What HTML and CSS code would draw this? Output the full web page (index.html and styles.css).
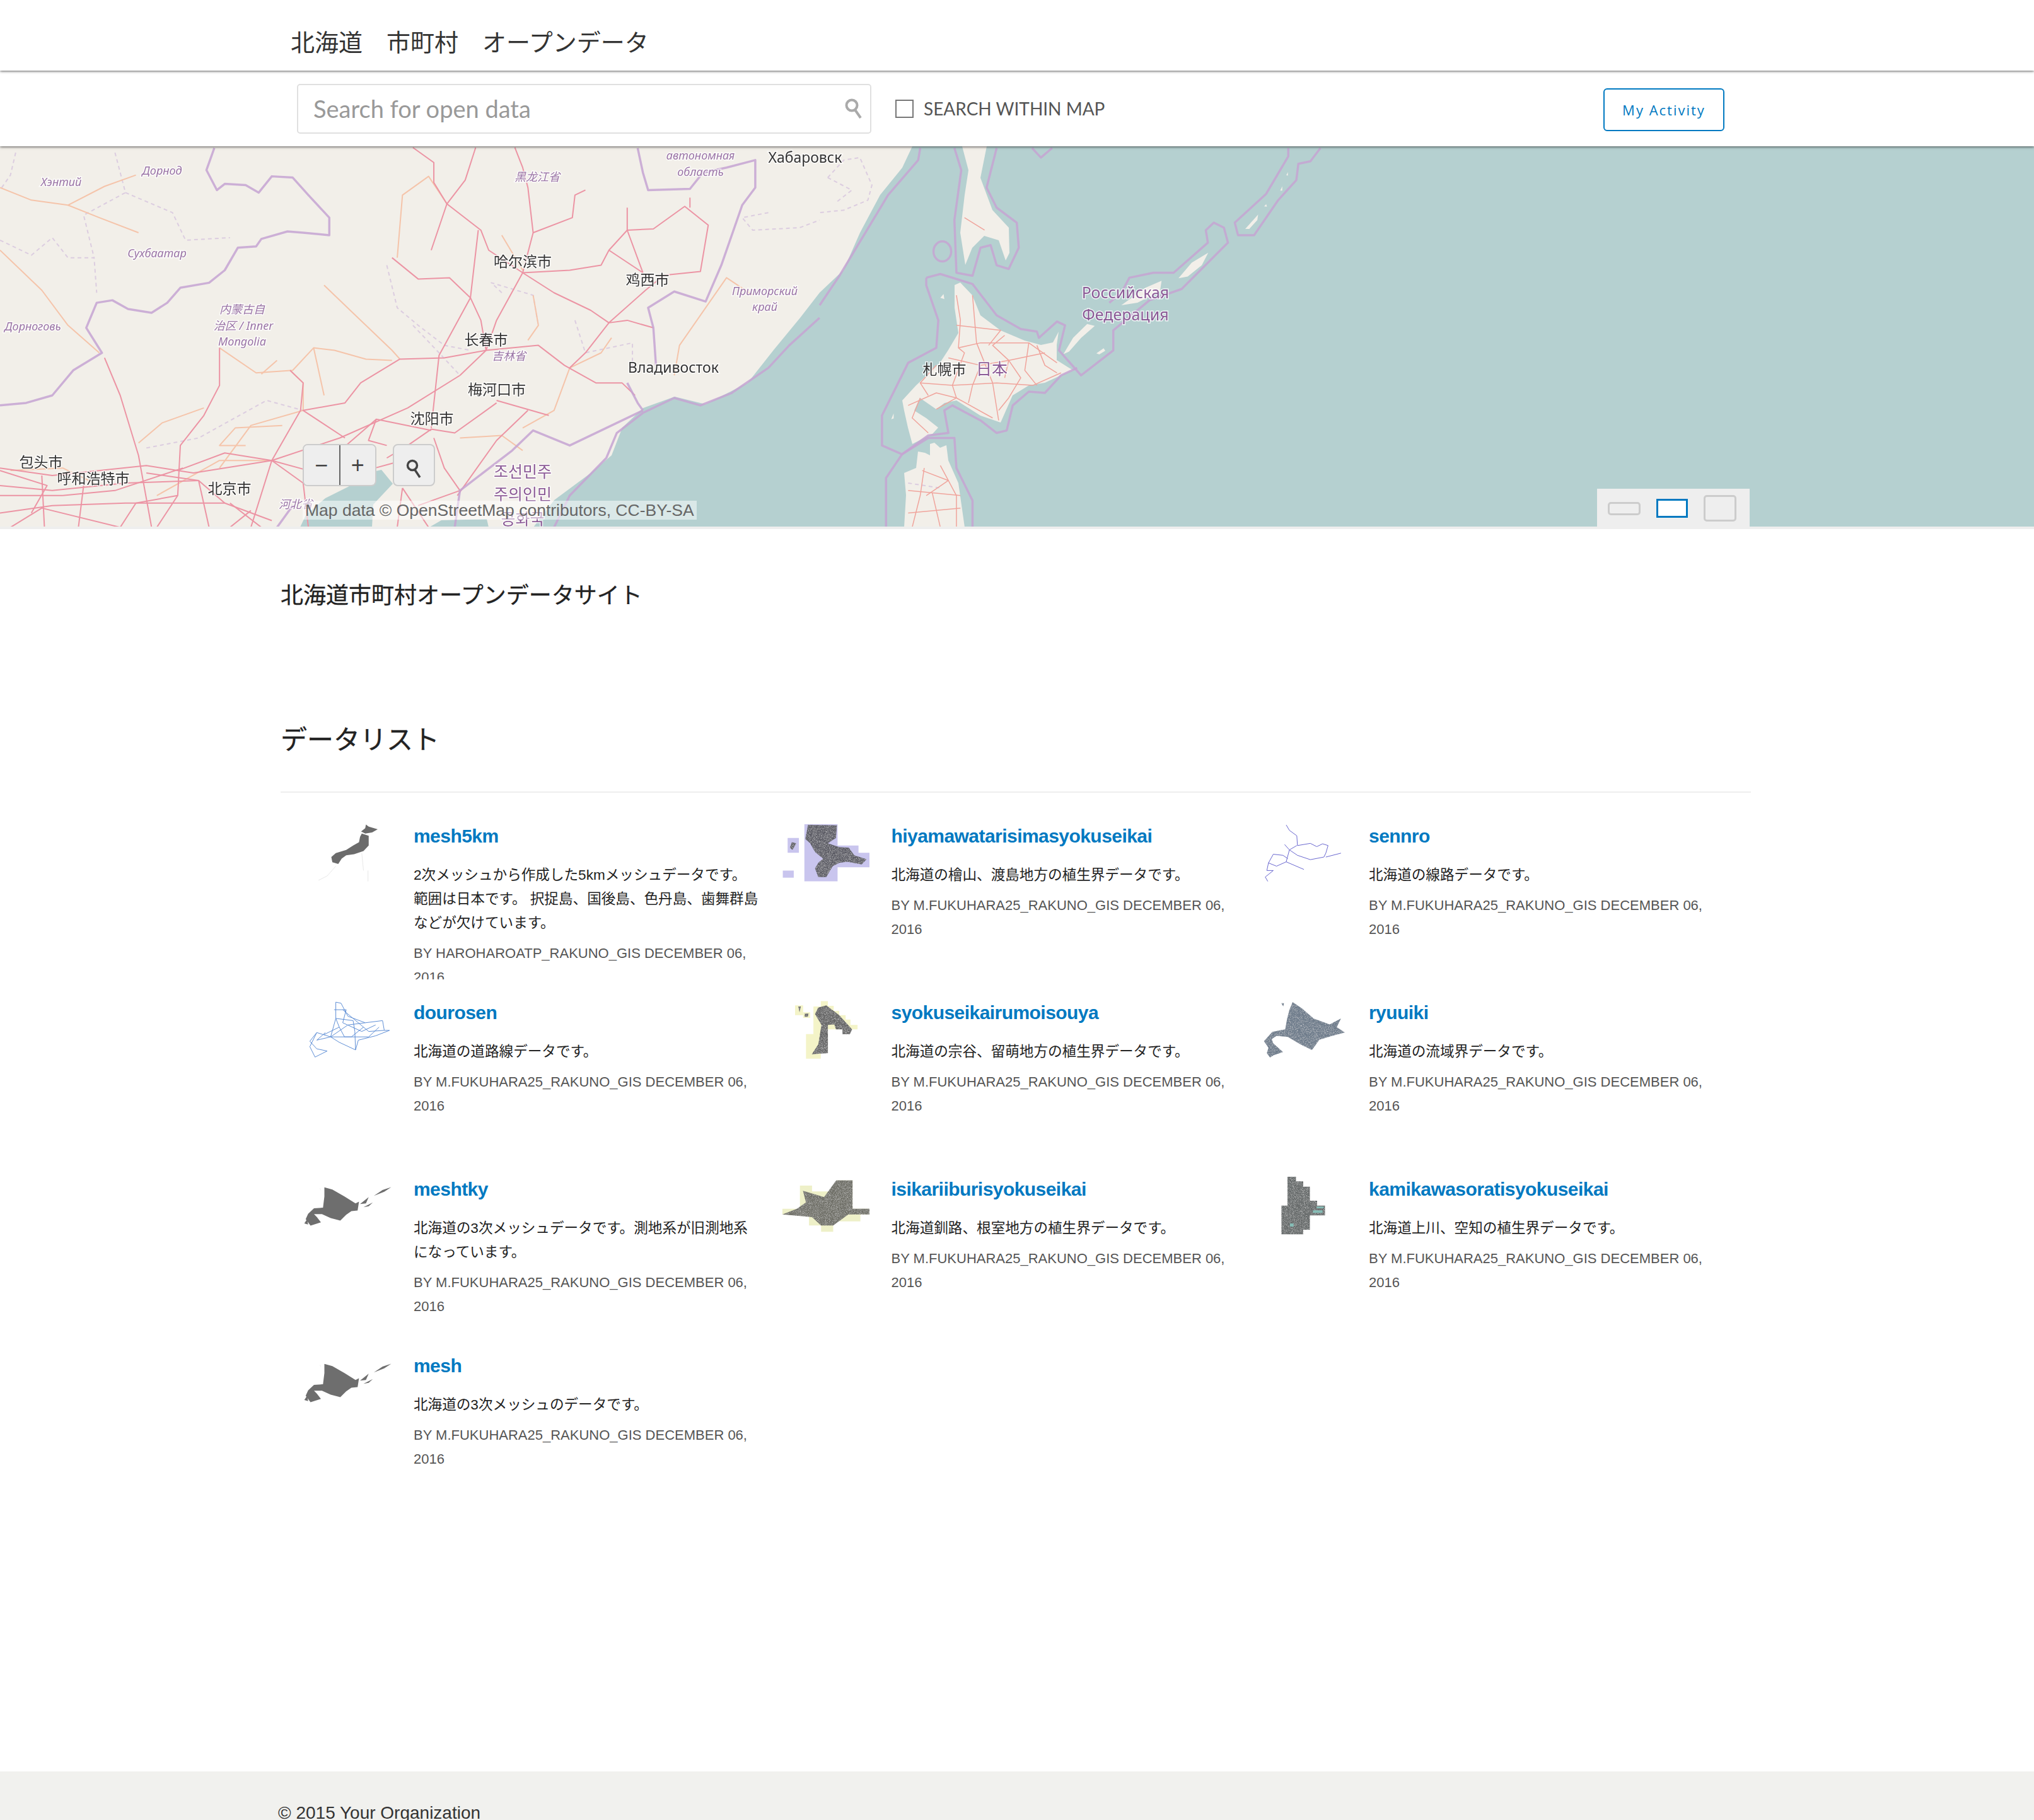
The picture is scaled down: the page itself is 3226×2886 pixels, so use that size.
FILE: index.html
```html
<!DOCTYPE html>
<html lang="ja">
<head>
  <meta charset="utf-8">
  <title>北海道 市町村 オープンデータ</title>
  <link rel="stylesheet" href="styles.css">
</head>
<body>
  <header class="site-header">
    <div class="site-title">北海道　市町村　オープンデータ</div>
  </header>

  <div class="toolbar">
    <div class="search-box">
      <span class="search-placeholder">Search for open data</span>
      <svg class="search-icon" viewBox="0 0 28 32"><circle cx="11" cy="11" r="8.5"/><path d="M16 18 L25 31"/></svg>
    </div>
    <label class="within-map"><span class="checkbox"></span>SEARCH WITHIN MAP</label>
    <a class="activity-btn">My Activity</a>
  </div>

  <section class="map">
    <svg class="map-canvas" viewBox="0 232 3226 603" preserveAspectRatio="none">
      <rect x="0" y="232" width="3226" height="603" class="sea"/>
      <!-- land -->
      <path class="land" d="M0 232 L1447 232 L1431 266 L1396 309 L1364 369 L1338 428 L1300 464 L1269 504 L1227 555 L1186 607 L1119 641 L1070 629 L1020 647 L987 678 L970 722 L937 750 L879 793 L846 836 L775 836 L772 823 L700 825 L681 836 L590 836 L592 800 L623 767 L605 745 L596 747 L552 772 L516 790 L485 817 L476 836 L0 836 Z"/>
      <path class="land" d="M1526 232 L1565 232 L1555 282 L1574 333 L1600 361 L1601 401 L1595 413 L1584 381 L1561 374 L1542 393 L1531 420 L1523 369 L1530 309 L1536 270 Z"/>
      <path class="land" d="M1523 448 L1542 468 L1555 500 L1587 524 L1625 540 L1651 547 L1670 543 L1679 526 L1676 547 L1676 571 L1695 583 L1702 587 L1683 595 L1657 607 L1632 611 L1606 627 L1587 670 L1555 659 L1517 635 L1498 639 L1485 649 L1459 631 L1450 651 L1469 663 L1488 678 L1479 688 L1447 704 L1440 678 L1434 651 L1431 635 L1453 611 L1466 599 L1491 575 L1504 555 L1520 528 L1514 488 L1514 452 Z"/>
      <path class="land" d="M1482 702 L1491 710 L1501 706 L1504 730 L1520 766 L1530 836 L1434 836 L1437 785 L1434 750 L1453 742 L1456 716 L1467 718 L1475 722 L1475 704 Z"/>
      <!-- islands, drawn in the crop's scale -->
      <g transform="translate(1300 230) scale(.638 .397)">
        <path class="land" d="M606 835 L630 770 L665 715 L684 722 L650 770 L620 825 Z M688 832 L706 812 L710 822 L695 836 Z M892 532 L925 470 L966 430 L950 480 L915 525 Z M750 640 L810 570 L850 542 L846 585 L790 630 Z M1058 335 L1090 278 L1088 300 L1068 335 Z M1145 182 L1150 165 L1150 182 Z M1105 245 L1110 236 L1112 246 Z M1160 120 L1164 108 L1164 122 Z M300 610 L308 595 L310 615 Z M178 1095 L184 1072 L184 1092 Z"/>
      </g>
      <!-- west half: traced at 1300x620 crop scale -->
      <g transform="translate(0 230) scale(.829 .397)">
        <g class="admin">
          <polyline points="240,190 330,270 355,380 440,370"/>
          <polyline points="0,380 60,440 100,370 130,450 180,450 185,590"/>
          <polyline points="740,480 760,650 800,720 850,800 900,820"/>
          <polyline points="960,590 940,550 1020,600 1030,720"/>
          <polyline points="280,1210 380,1170 510,1020 580,1060"/>
          <polyline points="1470,270 1420,290 1440,340 1530,330 1568,300"/>
          <polyline points="1100,700 1120,830 1210,790 1210,900"/>
          <polyline points="220,30 240,190 160,280 180,450"/>
          <polyline points="790,720 840,830 880,920"/>
          <polyline points="30,30 20,120 0,180"/>
        </g>
        <g class="road-minor">
          <polyline points="0,170 60,220 130,240 200,165 260,120"/>
          <polyline points="130,240 190,290 265,350"/>
          <polyline points="0,420 80,580 130,720 190,830"/>
          <polyline points="620,560 680,680 750,820 765,855"/>
          <polyline points="420,810 490,910 560,900 600,810 640,820 700,855 750,860"/>
          <polyline points="265,1190 310,1110 390,1050"/>
          <polyline points="555,900 580,950 580,1060"/>
          <polyline points="760,450 770,200 820,125 855,235"/>
          <polyline points="1020,600 1030,720 1010,780"/>
          <polyline points="1440,600 1390,530 1300,800 1290,920"/>
          <polyline points="1090,890 1060,1060 1000,1130"/>
          <polyline points="420,1290 480,1120 580,1060"/>
          <polyline points="300,1400 420,1260 520,1260"/>
          <polyline points="500,915 530,860"/>
          <polyline points="600,810 620,1000"/>
          <polyline points="960,360 1000,500"/>
          <polyline points="1090,890 1150,830 1170,770"/>
          <polyline points="880,1170 960,1160 1000,1220"/>
          <polyline points="20,1300 120,1290 180,1350"/>
          <polyline points="540,1120 450,1130 420,1200 470,1200"/>
        </g>
        <g class="road">
          <polyline points="790,10 830,70 830,150 855,235 920,340 935,420 1000,510 1060,590 1130,660 1165,710 1200,700 1250,730"/>
          <polyline points="910,10 890,140 855,235 825,420"/>
          <polyline points="985,10 1000,90 1010,170 1020,350 1000,510 950,700 930,820 880,920"/>
          <polyline points="1120,180 1100,200 1095,290 1020,350"/>
          <polyline points="1000,510 1090,500 1150,480 1165,420 1200,340 1250,335 1310,245 1355,320 1340,505 1270,520 1235,580 1165,710 1120,830 1090,890"/>
          <polyline points="1320,210 1320,250"/>
          <polyline points="1200,250 1200,340 1230,510"/>
          <polyline points="1165,420 1230,510"/>
          <polyline points="750,450 800,535 860,530 900,610 920,700 930,820"/>
          <polyline points="915,340 900,610 840,840 825,1130"/>
          <polyline points="930,820 850,850 765,855 690,950 660,1030 580,1060 660,1170"/>
          <polyline points="930,820 1030,800 1080,880 1140,950 1190,950 1215,1000"/>
          <polyline points="420,810 420,960 390,1080 345,1200 340,1400 300,1527"/>
          <polyline points="200,850 230,1000 265,1240 290,1527"/>
          <polyline points="555,900 580,950 575,1060 520,1260 480,1527"/>
          <polyline points="880,920 780,1050 650,1170 520,1260 370,1310 280,1280 100,1320 0,1290"/>
          <polyline points="825,1140 720,1095 640,1240 590,1310"/>
          <polyline points="950,1030 870,1150 825,1135 780,1200 740,1250"/>
          <polyline points="950,1020 1050,1080"/>
          <polyline points="1010,1060 950,1180 875,1400"/>
          <polyline points="0,1470 100,1440 240,1430 430,1430 520,1500"/>
          <polyline points="430,1430 380,1340 280,1310"/>
          <polyline points="80,1320 85,1527"/>
          <polyline points="160,1360 150,1527"/>
          <polyline points="440,1430 500,1527"/>
          <polyline points="480,1460 440,1527"/>
          <polyline points="0,1360 100,1380 240,1350 380,1340"/>
          <polyline points="20,1527 80,1450 230,1527"/>
          <polyline points="340,1300 430,1230 520,1260 590,1300"/>
          <polyline points="640,1240 700,1300 770,1260"/>
          <polyline points="770,1370 820,1527"/>
          <polyline points="830,1170 850,1290 880,1380 800,1440"/>
          <polyline points="0,1400 120,1400 220,1380 350,1290"/>
          <polyline points="230,1527 260,1430 340,1400"/>
          <polyline points="0,1300 90,1360 60,1470"/>
          <polyline points="380,1340 400,1527"/>
          <polyline points="520,1260 580,1350 590,1527"/>
          <polyline points="720,1095 705,1180 740,1200"/>
          <polyline points="770,1370 760,1527"/>
        </g>
        <g class="border">
          <polyline points="410,12 395,100 415,180 430,155 470,160 495,190 520,125 560,130 590,200 630,290 630,360 580,350 550,345 500,375 490,405 455,410 430,500 400,550 345,570 320,630 290,670 245,655 215,620 185,630 165,730 195,830 140,900 100,1000 50,1030 0,1040"/>
          <polyline points="1220,12 1230,110 1240,180 1320,175 1345,110 1390,90 1445,60 1445,170 1420,240 1380,480 1350,625 1290,585 1240,650 1250,730 1255,880"/>
          <polyline points="1200,950 1220,1030 1230,1060"/>
          <polyline points="1230,1060 1090,1200 1020,1140 980,1220 880,1380 870,1527"/>
          <polyline points="1568,690 1510,800 1470,890 1400,990 1340,1040 1290,1010 1230,1070 1180,1150 1160,1250 1090,1400 1060,1527"/>
          <polyline points="530,1527 560,1440"/>
        </g>
      </g>
      <!-- east half: traced at 1000x620 crop scale -->
      <g transform="translate(1300 230) scale(.638 .397)">
        <g class="admin">
          <polyline points="20,130 60,60 100,50 130,160 120,220 60,260 0,270"/>
          <polyline points="20,130 80,180 40,230"/>
          <polyline points="220,1350 300,1370"/>
        </g>
        <g class="road-fine">
          <polyline points="340,600 350,700 345,810 360,830 330,960 340,1010 290,1055"/>
          <polyline points="345,810 400,790 520,790 590,870"/>
          <polyline points="330,960 440,950 530,960 600,910"/>
          <polyline points="380,600 390,790 430,950 445,1100"/>
          <polyline points="340,1010 430,1090"/>
          <polyline points="250,1010 230,1090 270,1150"/>
          <polyline points="460,760 430,800 470,860 460,930"/>
          <polyline points="520,790 510,900 540,960"/>
          <polyline points="250,950 330,960"/>
          <polyline points="340,720 450,740 420,800"/>
          <polyline points="320,850 400,880 470,860 560,830"/>
          <polyline points="270,1000 250,950 290,880"/>
          <polyline points="400,880 380,960 370,1030"/>
          <polyline points="470,860 500,930 470,1010 445,1060"/>
          <polyline points="540,800 560,880 590,910"/>
          <polyline points="220,1040 290,990 340,1010"/>
          <polyline points="360,290 410,340"/>
          <polyline points="260,1290 250,1400 230,1527"/>
          <polyline points="300,1280 340,1400 340,1527"/>
          <polyline points="220,1380 350,1400"/>
          <polyline points="220,1470 350,1450"/>
          <polyline points="280,1390 300,1527"/>
          <polyline points="255,1300 320,1340 265,1400"/>
        </g>
        <g class="border">
          <polyline points="250,12 245,60 170,200 110,360 50,520 0,640"/>
          <polyline points="335,12 352,100 335,300 340,510 380,522 400,410 425,400 440,480 470,495 495,410 490,310 440,250 415,170 440,12"/>
          <ellipse cx="305" cy="425" rx="22" ry="40"/>
          <polyline points="528,12 550,50 578,12"/>
          <polyline points="1245,12 1220,65 1190,75 1185,140 1140,220 1080,360 1040,360 1032,310 1110,195 1165,45 1165,12"/>
          <polyline points="265,530 300,515 380,555 440,680 500,735 540,745 545,770 590,705 610,720 595,820 650,920 730,820 730,740 820,620 900,575 1015,390 1005,330 980,310 960,340 965,390 880,510 830,510 770,530 750,590 720,630"/>
          <polyline points="640,890 600,920 560,990 520,985 480,1040 465,1140 440,1150 400,1100 330,1040 310,1060 320,1150 270,1160 205,1235 155,1200 155,1080 220,870 290,810 295,700 265,560 265,530"/>
          <polyline points="205,1235 270,1170 335,1170 340,1290 380,1420 380,1530"/>
          <polyline points="165,1530 165,1330 205,1235"/>
        </g>
      </g>
      <!-- labels -->
      <g class="label-region">
        <text x="97" y="295">Хэнтий</text>
        <text x="257" y="277">Дорнод</text>
        <text x="249" y="408">Сухбаатар</text>
        <text x="52" y="524">Дорноговь</text>
        <text x="384" y="497">内蒙古自</text>
        <text x="386" y="523">治区 / Inner</text>
        <text x="384" y="548">Mongolia</text>
        <text x="852" y="287">黑龙江省</text>
        <text x="1111" y="253">автономная</text>
        <text x="1111" y="279">область</text>
        <text x="1213" y="468">Приморский</text>
        <text x="1213" y="493">край</text>
        <text x="807" y="571">吉林省</text>
        <text x="469" y="806">河北省</text>
      </g>
      <g class="label-city">
        <text x="1277" y="258">Хабаровск</text>
        <text x="829" y="423">哈尔滨市</text>
        <text x="1027" y="452">鸡西市</text>
        <text x="771" y="547">长春市</text>
        <text x="1068" y="591">Владивосток</text>
        <text x="788" y="626">梅河口市</text>
        <text x="685" y="672">沈阳市</text>
        <text x="65" y="741">包头市</text>
        <text x="148" y="767">呼和浩特市</text>
        <text x="364" y="783">北京市</text>
        <text x="1498" y="594">札幌市</text>
      </g>
      <g class="label-country">
        <text x="829" y="757">조선민주</text>
        <text x="829" y="793">주의인민</text>
        <text x="829" y="832">공화국</text>
        <text x="1573" y="594">日本</text>
        <text x="1785" y="473">Российская</text>
        <text x="1785" y="508">Федерация</text>
      </g>
    </svg>

    <div class="zoom-group">
      <button class="map-btn">−</button>
      <button class="map-btn map-btn-plus">+</button>
    </div>
    <button class="map-btn map-btn-search">
      <svg viewBox="0 0 26 32"><circle cx="10" cy="11" r="7.5"/><path d="M14 18 L22 30"/></svg>
    </button>
    <div class="attribution">Map data © OpenStreetMap contributors, CC-BY-SA</div>
    <div class="map-size">
      <span class="size-opt size-small"></span>
      <span class="size-opt size-medium"></span>
      <span class="size-opt size-large"></span>
    </div>
  </section>

  <main class="content">
    <h1 class="site-intro">北海道市町村オープンデータサイト</h1>
    <h2 class="list-title">データリスト</h2>

    <!-- shared outline for the two mesh thumbnails, and the grain on the polygon ones -->
    <svg class="defs"><defs>
      <symbol id="hokkaido" viewBox="111 109 255 280" preserveAspectRatio="none">
        <path d="M158 160 L165 180 L160 165 Z M172 158 L195 168 L230 200 L262 232 L272 224 L268 265 L250 268 L235 285 L218 312 L190 300 L165 282 L142 282 L150 295 L162 320 L132 335 L118 305 L125 280 L142 255 L168 252 L172 200 Z M275 235 L300 203 L292 232 Z M285 250 L312 228 L300 245 Z M315 197 L340 170 L365 157 L345 178 Z M114 325 L122 305 L125 330 Z"/>
      </symbol>
      <filter id="grain" x="0" y="0" width="1" height="1">
        <feTurbulence type="fractalNoise" baseFrequency=".9" numOctaves="2" result="noise"/>
        <feColorMatrix in="noise" type="matrix" values="0 0 0 0 1  0 0 0 0 1  0 0 0 0 1  0 0 0 1.1 -.5" result="dots"/>
        <feComposite in="dots" in2="SourceGraphic" operator="in" result="clipped"/>
        <feMerge><feMergeNode in="SourceGraphic"/><feMergeNode in="clipped"/></feMerge>
      </filter>
    </defs></svg>

    <div class="data-list">
      <article class="data-item">
        <svg class="thumb" viewBox="111 104 255 270" preserveAspectRatio="none">
          <path fill="#6b6b6b" d="M292 108 L300 118 L326 130 L310 145 L290 150 L278 140 L290 125 Z M280 150 L300 160 L300 205 L285 230 L258 245 L235 250 L222 265 L212 290 L195 282 L192 258 L205 240 L235 225 L255 205 L272 190 L275 165 Z"/>
          <path fill="none" stroke="#ccc" d="M205 300 L180 345 L155 365 M280 240 L285 320 M298 320 L298 370"/>
        </svg>
        <div class="item-body">
          <h3><a>mesh5km</a></h3>
          <p class="item-desc">2次メッシュから作成した5kmメッシュデータです。<br>範囲は日本です。 択捉島、国後島、色丹島、歯舞群島<br>などが欠けています。</p>
          <p class="item-meta">BY HAROHAROATP_RAKUNO_GIS DECEMBER 06, 2016</p>
        </div>
      </article>

      <article class="data-item">
        <svg class="thumb" viewBox="35 104 274 270" preserveAspectRatio="none">
          <path fill="#c9c5ee" d="M107 107 H210 V205 H275 V238 H310 V305 H210 V370 H107 Z M55 170 H90 V238 H55 Z M40 320 H74 V353 H40 Z"/>
          <path class="grainy" fill="#5d5d66" d="M118 110 L208 112 L205 170 L180 195 L215 212 L245 215 L262 250 L300 268 L285 292 L240 280 L215 285 L195 300 L175 350 L150 350 L140 310 L150 285 L165 265 L140 235 L125 195 L110 175 Z M68 190 L82 195 L70 225 L62 215 Z"/>
        </svg>
        <div class="item-body">
          <h3><a>hiyamawatarisimasyokuseikai</a></h3>
          <p class="item-desc">北海道の檜山、渡島地方の植生界データです。</p>
          <p class="item-meta">BY M.FUKUHARA25_RAKUNO_GIS DECEMBER 06, 2016</p>
        </div>
      </article>

      <article class="data-item">
        <svg class="thumb" viewBox="29 104 274 270" preserveAspectRatio="none">
          <g fill="none" stroke="#6a68d0" stroke-width="1">
            <polyline points="115,110 125,135 148,160 150,205 190,195 210,210 228,197 245,205 238,240 232,258 190,270 150,250 125,225 110,200"/>
            <polyline points="238,258 285,240"/>
            <polyline points="148,205 125,225 115,280 170,315"/>
            <polyline points="115,280 85,300 60,285 55,320 75,320 50,350 58,370"/>
            <polyline points="60,285 75,245 105,250 120,265"/>
          </g>
        </svg>
        <div class="item-body">
          <h3><a>sennro</a></h3>
          <p class="item-desc">北海道の線路データです。</p>
          <p class="item-meta">BY M.FUKUHARA25_RAKUNO_GIS DECEMBER 06, 2016</p>
        </div>
      </article>

      <article class="data-item">
        <svg class="thumb" viewBox="111 916 255 270" preserveAspectRatio="none">
          <g fill="none" stroke="#5f8fd6" stroke-width="1">
            <polyline points="205,925 220,930 240,990 290,1020 340,1010 345,1055 360,1055 320,1080 270,1100 262,1145 215,1110 190,1085 150,1065 130,1105 150,1140 180,1150 145,1178 130,1130 150,1065"/>
            <polyline points="205,925 205,1000 190,1085 240,1030 290,1020"/>
            <polyline points="215,1040 230,1085 300,1085 330,1040"/>
            <polyline points="170,1075 215,1040 205,1000 255,1010 260,1060 262,1145"/>
            <polyline points="225,960 255,1000 300,1060 345,1055"/>
            <polyline points="190,1085 150,1100 175,1065"/>
            <polyline points="200,960 235,960 225,1020 280,1060 320,1030"/>
            <polyline points="190,1085 250,1085 285,1040"/>
          </g>
        </svg>
        <div class="item-body">
          <h3><a>dourosen</a></h3>
          <p class="item-desc">北海道の道路線データです。</p>
          <p class="item-meta">BY M.FUKUHARA25_RAKUNO_GIS DECEMBER 06, 2016</p>
        </div>
      </article>

      <article class="data-item">
        <svg class="thumb" viewBox="35 916 274 270" preserveAspectRatio="none">
          <path fill="#f4f4c8" d="M158 920 H180 V942 H198 V965 H215 V985 H235 V1005 H250 V1030 H272 V1050 H180 V1160 H158 V1185 H112 V1072 H135 V1025 H135 V945 H158 Z M78 940 H103 V985 H78 Z M103 972 H125 V997 H103 Z"/>
          <path class="grainy" fill="#666" d="M150 950 L175 940 L215 985 L255 1050 L248 1073 L225 1073 L225 1050 L205 1050 L200 1028 L180 1030 L180 1160 L130 1165 L150 1120 L160 1030 L140 980 Z M88 945 L96 945 L92 972 Z M108 978 L120 978 L118 992 L108 992 Z"/>
        </svg>
        <div class="item-body">
          <h3><a>syokuseikairumoisouya</a></h3>
          <p class="item-desc">北海道の宗谷、留萌地方の植生界データです。</p>
          <p class="item-meta">BY M.FUKUHARA25_RAKUNO_GIS DECEMBER 06, 2016</p>
        </div>
      </article>

      <article class="data-item">
        <svg class="thumb" viewBox="29 916 274 270" preserveAspectRatio="none">
          <path class="grainy" fill="#6e7b8b" d="M135 925 L165 955 L200 1000 L250 1028 L285 1000 L272 1040 L297 1065 L258 1080 L218 1098 L195 1145 L160 1120 L120 1085 L85 1080 L70 1095 L75 1115 L105 1155 L75 1170 L65 1180 L55 1160 L60 1135 L46 1105 L72 1062 L112 1050 L118 1000 L125 960 Z M100 930 L108 930 L106 945 Z"/>
        </svg>
        <div class="item-body">
          <h3><a>ryuuiki</a></h3>
          <p class="item-desc">北海道の流域界データです。</p>
          <p class="item-meta">BY M.FUKUHARA25_RAKUNO_GIS DECEMBER 06, 2016</p>
        </div>
      </article>

      <article class="data-item">
        <svg class="thumb thumb-mesh"><use href="#hokkaido"/></svg>
        <div class="item-body">
          <h3><a>meshtky</a></h3>
          <p class="item-desc">北海道の3次メッシュデータです。測地系が旧測地系<br>になっています。</p>
          <p class="item-meta">BY M.FUKUHARA25_RAKUNO_GIS DECEMBER 06, 2016</p>
        </div>
      </article>

      <article class="data-item">
        <svg class="thumb" viewBox="19 108 146 279" preserveAspectRatio="none">
          <path fill="#eef0c8" d="M110 125 H137 V260 H165 V287 H150 V320 H105 V370 H85 V340 H65 V287 H21 V260 H50 V150 H70 V178 H110 Z"/>
          <path class="grainy" fill="#6f6f68" d="M110 125 H137 V260 H165 V287 H130 L105 340 H85 L70 300 L21 287 L45 260 L60 230 L55 175 L90 205 Z"/>
        </svg>
        <div class="item-body">
          <h3><a>isikariiburisyokuseikai</a></h3>
          <p class="item-desc">北海道釧路、根室地方の植生界データです。</p>
          <p class="item-meta">BY M.FUKUHARA25_RAKUNO_GIS DECEMBER 06, 2016</p>
        </div>
      </article>

      <article class="data-item">
        <svg class="thumb" viewBox="810 108 146 279" preserveAspectRatio="none">
          <path class="grainy" fill="#666a6a" d="M858 108 H872 V130 H884 V155 H895 V222 H907 V245 H920 V292 H895 V360 H884 V382 H848 V245 H858 Z"/>
          <path fill="#86bdb6" d="M906 250 H918 V258 H906 Z M900 268 H916 V280 H900 Z M862 330 H868 V345 H862 Z"/>
        </svg>
        <div class="item-body">
          <h3><a>kamikawasoratisyokuseikai</a></h3>
          <p class="item-desc">北海道上川、空知の植生界データです。</p>
          <p class="item-meta">BY M.FUKUHARA25_RAKUNO_GIS DECEMBER 06, 2016</p>
        </div>
      </article>

      <article class="data-item">
        <svg class="thumb thumb-mesh"><use href="#hokkaido"/></svg>
        <div class="item-body">
          <h3><a>mesh</a></h3>
          <p class="item-desc">北海道の3次メッシュのデータです。</p>
          <p class="item-meta">BY M.FUKUHARA25_RAKUNO_GIS DECEMBER 06, 2016</p>
        </div>
      </article>
    </div>
  </main>

  <footer class="site-footer">© 2015 Your Organization</footer>
</body>
</html>
```

FILE: styles.css
```css
html, body { margin: 0; padding: 0; }
body {
  display: flex;
  flex-direction: column;
  height: 2886px;
  overflow: hidden;
  background: #fff;
  color: #222;
  font-family: "Liberation Sans", "Noto Sans CJK JP", sans-serif;
}

/* header + search bar */
.site-header {
  position: relative;
  z-index: 3;
  height: 112px;
  padding: 41px 0 0 461px;
  box-sizing: border-box;
  background: #fff;
  box-shadow: 0 1px 4px rgba(0, 0, 0, .65);
}
.site-title { font-size: 38px; line-height: 48px; color: #333; font-family: "Noto Sans CJK JP", sans-serif; }

.toolbar {
  position: relative;
  z-index: 2;
  display: flex;
  align-items: center;
  height: 120px;
  padding: 0 491px 0 471px;
  background: #fff;
  box-shadow: 0 1px 4px rgba(0, 0, 0, .65);
}
.search-box {
  display: flex;
  align-items: center;
  justify-content: space-between;
  box-sizing: border-box;
  width: 911px;
  height: 79px;
  padding: 0 12px 0 24px;
  border: 2px solid #e0e0e0;
  border-radius: 5px;
}
.search-placeholder { font-family: Lato, sans-serif; font-size: 38px; color: #999; }
.search-icon { width: 28px; height: 32px; fill: none; stroke: #aaa; stroke-width: 4; }
.within-map {
  display: flex;
  align-items: center;
  margin-left: 38px;
  font-family: Lato, sans-serif;
  font-size: 28px;
  color: #555;
}
.checkbox {
  width: 25px;
  height: 25px;
  margin-right: 16px;
  border: 2px solid #777;
}
.activity-btn {
  margin: 4px 0 0 auto;
  box-sizing: border-box;
  width: 192px;
  height: 68px;
  border: 2px solid #0079c1;
  border-radius: 6px;
  color: #0079c1;
  font-family: "Open Sans", sans-serif;
  font-size: 22px;
  line-height: 64px;
  letter-spacing: 2px;
  text-align: center;
}

/* map */
.map {
  position: relative;
  height: 603px;
  border-bottom: 4px solid #eee;
  overflow: hidden;
}
.map-canvas { display: block; width: 100%; height: 603px; filter: blur(.7px); }
.sea { fill: #b5d0d0; }
.land { fill: #f2efe9; }
.map-canvas polyline, .map-canvas ellipse { fill: none; vector-effect: non-scaling-stroke; stroke-linejoin: round; }
.road polyline { stroke: #ec94a4; stroke-width: 2; }
.road-minor polyline { stroke: #f5c4aa; stroke-width: 2; }
.road-fine polyline { stroke: #f0a49c; stroke-width: 1.5; }
.admin polyline { stroke: #dccde0; stroke-width: 2; stroke-dasharray: 6 5; }
.border polyline, .border ellipse { stroke: #c6a5d3; stroke-width: 3.5; opacity: .85; }

.label-region text, .label-city text, .label-country text {
  text-anchor: middle;
  paint-order: stroke;
  stroke: rgba(255, 255, 255, .75);
  stroke-width: 3px;
  font-family: "Noto Sans", "Noto Sans CJK SC", sans-serif;
}
.label-region text { font-size: 18px; font-style: italic; fill: #9a74a6; }
.label-city text { font-size: 23px; fill: #333; }
.label-country text { font-size: 25px; fill: #8b5a96; }

.zoom-group {
  position: absolute;
  left: 480px;
  top: 472px;
  display: flex;
  box-sizing: border-box;
  width: 117px;
  height: 67px;
  border: 2px solid #ccc;
  border-radius: 8px;
  overflow: hidden;
}
.map-btn {
  flex: 1;
  padding: 0;
  border: 0;
  background: #eee;
  color: #444;
  font-family: "Liberation Sans", sans-serif;
  font-size: 36px;
}
.map-btn-plus { border-left: 2px solid #666; }
.map-btn-search {
  position: absolute;
  left: 623px;
  top: 472px;
  width: 67px;
  height: 67px;
  box-sizing: border-box;
  border: 2px solid #ccc;
  border-radius: 8px;
}
.map-btn-search svg { display: block; width: 26px; height: 32px; margin: 10px auto 0; fill: none; stroke: #444; stroke-width: 3.5; }
.attribution {
  position: absolute;
  left: 480px;
  top: 562px;
  width: 625px;
  height: 30px;
  padding-left: 4px;
  box-sizing: border-box;
  background: rgba(255, 255, 255, .5);
  color: #666;
  font-size: 26.5px;
  line-height: 30px;
  white-space: nowrap;
}
.map-size {
  position: absolute;
  left: 2533px;
  bottom: 0;
  display: flex;
  align-items: center;
  box-sizing: border-box;
  width: 242px;
  height: 60px;
  padding: 2px 0 0 17px;
  gap: 25px;
  background: #eee;
}
.size-opt { box-sizing: border-box; border: 3px solid #ccc; border-radius: 5px; background: #eee; }
.size-small { width: 52px; height: 21px; }
.size-medium { width: 50px; height: 30px; border-color: #0079c1; border-radius: 0; background: #fff; }
.size-large { width: 52px; height: 42px; }

/* content */
.content { flex: 1; padding: 81px 449px 0 445px; }
.site-intro { margin: 0; font-size: 36px; line-height: 50px; font-weight: 400; color: #222; -webkit-text-stroke: .3px #222; }
.list-title {
  margin: 174px 0 0;
  padding-bottom: 51px;
  border-bottom: 2px solid #eee;
  font-size: 42px;
  line-height: 60px;
  font-weight: 400;
  color: #222;
  -webkit-text-stroke: .3px #222;
}
.defs { display: block; width: 0; height: 0; }
.data-list {
  display: grid;
  grid-template-columns: repeat(3, 757.5px);
  margin-top: 49px;
  padding-left: 36px;
}
.data-item {
  display: flex;
  gap: 35px;
  height: 247px;
  margin-bottom: 33px;
  overflow: hidden;
}
.thumb { flex: none; width: 140px; height: 93px; }
.thumb polyline { vector-effect: non-scaling-stroke; }
.thumb-mesh { height: 96px; }
.thumb-mesh use { fill: #6e6e6e; width: 140px; height: 96px; }
.grainy { filter: url(#grain); }
.item-body { width: 556px; }
.item-body h3 { margin: 0; font-size: 30px; line-height: 40px; font-weight: bold; letter-spacing: -.55px; }
.item-body h3 a { color: #0079c1; }
.item-desc { margin: 23px 0 0; font-size: 22.6px; line-height: 38px; color: #222; }
.item-meta { margin: 10px 0 0; font-size: 22px; line-height: 38px; color: #555; }

.site-footer {
  height: 77px;
  padding: 48px 0 0 441px;
  box-sizing: border-box;
  background: #f1f1ee;
  font-size: 28px;
  line-height: 36px;
  color: #333;
}
```
